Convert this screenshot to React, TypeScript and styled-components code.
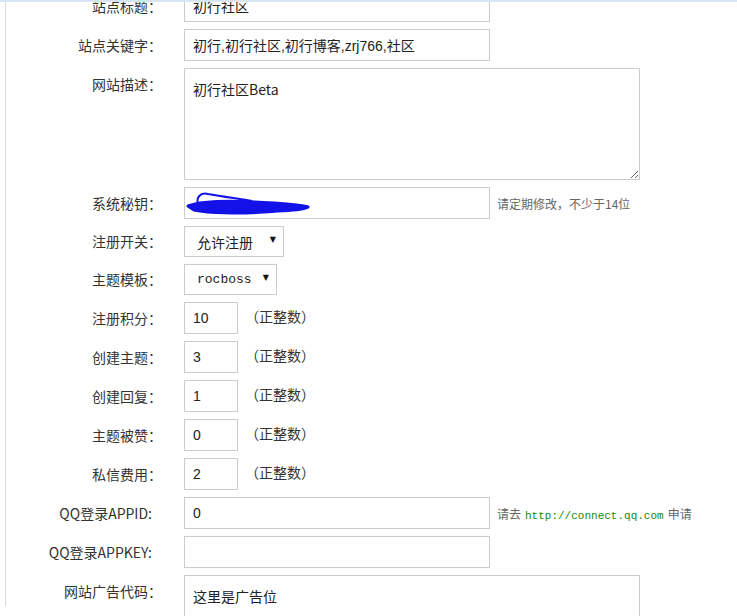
import React from 'react';
import styled, { createGlobalStyle } from 'styled-components';

const GlobalStyle = createGlobalStyle`
    html, body {
        margin: 0;
        padding: 0;
        background: #fff;
        overflow: hidden;
    }
    body {
        font-family: "Noto Sans CJK SC", "Liberation Sans", sans-serif;
        font-size: 14px;
        color: #333;
    }
`

const Page = styled.div`
    height: 616px;
    border-top: 2px solid #d7e4f1;
    overflow: hidden;
`

const Panel = styled.div`
    margin-left: 5px;
    height: 100%;
    border-left: 1px solid #dcdcdc;
`

const Form = styled.div`
    display: flex;
    flex-direction: column;
    gap: 7px;
    margin-top: -12px;
`

const Row = styled.div`
    display: grid;
    grid-template-columns: 156px 1fr;
    column-gap: 22px;
    align-items: start;
`

const Label = styled.div<{ $pad?: number; $h?: number }>`
    text-align: right;
    line-height: ${p => p.$h || 32}px;
    height: ${p => p.$h || 32}px;
    white-space: nowrap;
    color: #333;
    padding-right: ${p => p.$pad || 0}px;
`

const Field = styled.div`
    display: flex;
    align-items: center;
    gap: 7px;
    position: relative;
`

const TextInput = styled.input<{ $w?: number }>`
    box-sizing: border-box;
    width: ${p => p.$w || 306}px;
    height: 32px;
    border: 1px solid #ccc;
    padding: 0 8px;
    margin: 0;
    font-family: "Liberation Sans", "Noto Sans CJK SC", sans-serif;
    font-size: 14px;
    color: #222;
    background: #fff;
    outline: none;
`

const Area = styled.textarea`
    box-sizing: border-box;
    width: 456px;
    height: 112px;
    border: 1px solid #ccc;
    padding: 10px 8px;
    margin: 0;
    font-family: "Noto Sans CJK SC", "Liberation Mono", monospace;
    font-size: 14px;
    line-height: 20px;
    color: #222;
    resize: both;
    outline: none;
`

const SelectBox = styled.div<{ $w: number; $mono?: boolean }>`
    box-sizing: border-box;
    width: ${p => p.$w}px;
    height: 31px;
    border: 1px solid #ccc;
    display: flex;
    align-items: center;
    justify-content: space-between;
    padding: 0 7px 0 12px;
    font-family: ${p => p.$mono ? '"Liberation Mono", monospace' : '"Noto Sans CJK SC", sans-serif'};
    font-size: ${p => p.$mono ? 13 : 14}px;
    color: #222;
`

const Arrow = styled.span`
    font-family: "DejaVu Sans", sans-serif;
    font-size: 8px;
    color: #111;
    margin-top: -4px;
`

const Hint = styled.span`
    font-size: 12px;
    color: #666;
    white-space: nowrap;
`

const Note = styled.span`
    font-size: 14px;
    color: #333;
    margin-top: -4px;
`

const Link = styled.a`
    font-family: "Liberation Mono", monospace;
    font-size: 11px;
    color: #138a13;
    text-decoration: none;
    margin: 0 4px;
`

const Scribble = styled.svg`
    position: absolute;
    left: 0;
    top: 0;
    pointer-events: none;
`

const numbers = [
    { label: '注册积分', value: '10' },
    { label: '创建主题', value: '3' },
    { label: '创建回复', value: '1' },
    { label: '主题被赞', value: '0' },
    { label: '私信费用', value: '2' },
]

export default function App() {
    return (
        <Page>
            <GlobalStyle />
            <Panel>
                <Form>
                    <Row>
                        <Label>站点标题：</Label>
                        <Field><TextInput defaultValue="初行社区" /></Field>
                    </Row>
                    <Row>
                        <Label>站点关键字：</Label>
                        <Field><TextInput defaultValue="初行,初行社区,初行博客,zrj766,社区" /></Field>
                    </Row>
                    <Row>
                        <Label>网站描述：</Label>
                        <Field><Area defaultValue="初行社区Beta" /></Field>
                    </Row>
                    <Row>
                        <Label>系统秘钥：</Label>
                        <Field>
                            <TextInput defaultValue="" />
                            <Hint>请定期修改，不少于14位</Hint>
                            <Scribble width="130" height="32" viewBox="0 0 130 32">
                                <path d="M14 17 C 12 11, 16 5, 24 7 C 40 10, 58 12, 68 14" fill="none" stroke="#1212e8" strokeWidth="2" />
                                <path d="M4 19 C 20 13, 60 14, 90 16 C 105 17, 118 18, 124 20 C 118 24, 100 23, 80 25 C 55 27, 25 26, 10 23 Z" fill="#1212e8" stroke="#1212e8" strokeWidth="3" strokeLinejoin="round" />
                            </Scribble>
                        </Field>
                    </Row>
                    <Row>
                        <Label $h={31}>注册开关：</Label>
                        <Field>
                            <SelectBox $w={100}>允许注册<Arrow>▼</Arrow></SelectBox>
                        </Field>
                    </Row>
                    <Row>
                        <Label $h={31}>主题模板：</Label>
                        <Field>
                            <SelectBox $w={93} $mono>rocboss<Arrow>▼</Arrow></SelectBox>
                        </Field>
                    </Row>
                    {numbers.map(n =>
                        <Row key={n.label}>
                            <Label>{n.label}：</Label>
                            <Field>
                                <TextInput $w={54} defaultValue={n.value} />
                                <Note>（正整数）</Note>
                            </Field>
                        </Row>
                    )}
                    <Row>
                        <Label $pad={10}>QQ登录APPID:</Label>
                        <Field>
                            <TextInput defaultValue="0" />
                            <Hint>请去<Link href="#">http://connect.qq.com</Link>申请</Hint>
                        </Field>
                    </Row>
                    <Row>
                        <Label $pad={10}>QQ登录APPKEY:</Label>
                        <Field><TextInput defaultValue="" /></Field>
                    </Row>
                    <Row>
                        <Label>网站广告代码：</Label>
                        <Field><Area defaultValue="这里是广告位" /></Field>
                    </Row>
                </Form>
            </Panel>
        </Page>
    )
}
